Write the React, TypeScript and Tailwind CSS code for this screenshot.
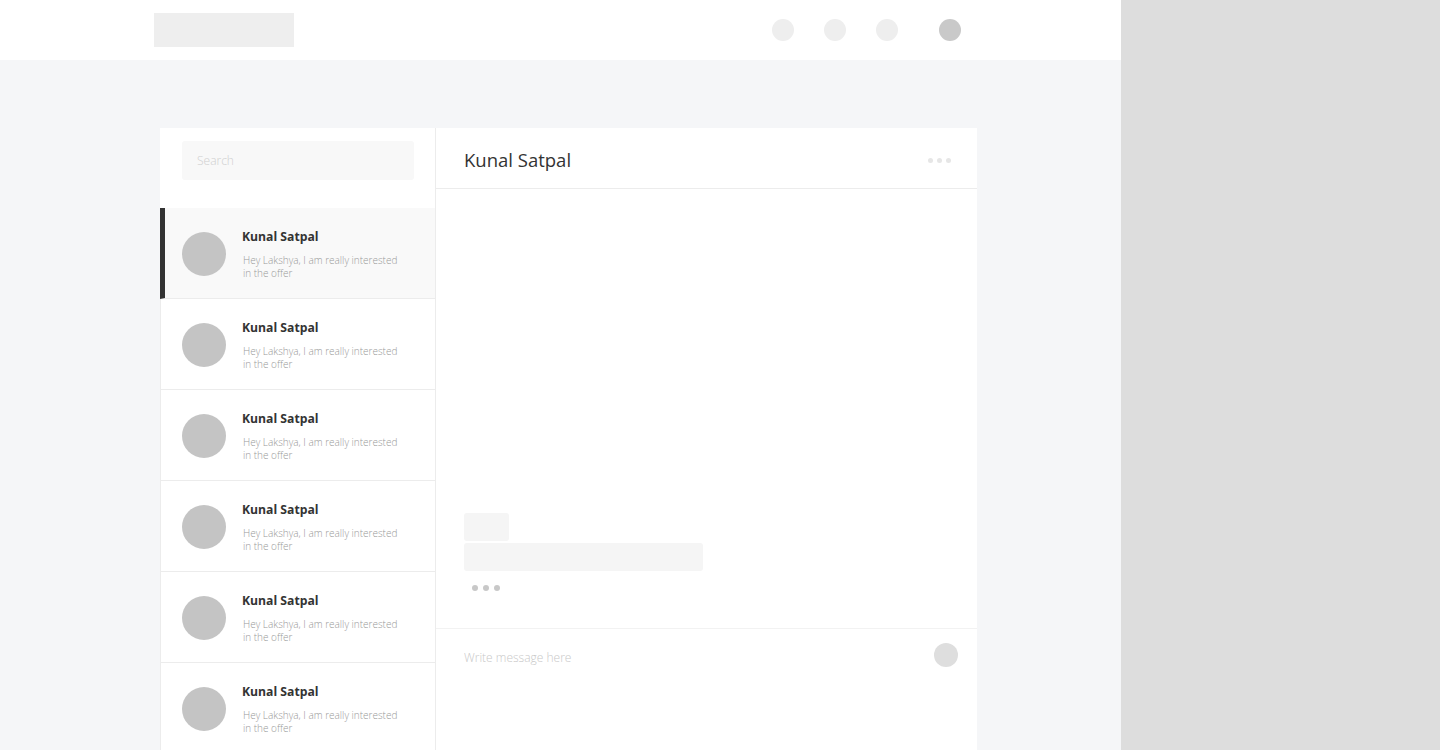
import React from "react";

const chats = Array.from({ length: 6 }, (_, i) => ({
  id: i,
  name: "Kunal Satpal",
  preview: "Hey Lakshya, I am really interested in the offer",
}));

function TopBar() {
  return (
    <header className="flex h-[60px] items-center bg-white pl-[154px]">
      <div className="h-[34px] w-[140px] bg-[#eeeeee]" />
      <div className="ml-[478px] flex items-center">
        <span className="h-[22px] w-[22px] rounded-full bg-[#eeeeee]" />
        <span className="ml-[30px] h-[22px] w-[22px] rounded-full bg-[#eeeeee]" />
        <span className="ml-[30px] h-[22px] w-[22px] rounded-full bg-[#eeeeee]" />
        <span className="ml-[41px] h-[22px] w-[22px] rounded-full bg-[#c9c9c9]" />
      </div>
    </header>
  );
}

function ChatList() {
  return (
    <aside className="w-[276px] shrink-0 border-r border-[#ececec] bg-white">
      <div className="pt-[13px] pl-[22px] pr-[21px] pb-[28px]">
        <input
          placeholder="Search"
          className="h-[39px] w-full rounded-[3px] bg-[#f8f8f8] px-[15px] text-[12px] font-light text-[#555] outline-none placeholder:text-[#cfcfcf]"
        />
      </div>
      <ul>
        {chats.map((c, i) => (
          <li
            key={c.id}
            className={
              i === 0
                ? "flex h-[91px] border-b border-l-[5px] border-b-[#ececec] border-l-[#333333] bg-[#f9f9f9] pt-[24px] pl-[17px]"
                : "flex h-[91px] border-b border-l border-[#ececec] bg-white pt-[24px] pl-[21px]"
            }
          >
            <div className="h-[44px] w-[44px] shrink-0 rounded-full bg-[#c4c4c4]" />
            <div className="ml-[16px]">
              <p className="-mt-[4px] text-[12.2px] font-bold leading-[18px] text-[#333333]">{c.name}</p>
              <p className="mt-[8px] ml-[1px] w-[160px] text-[10px] font-light leading-[13px] text-[#999999]">{c.preview}</p>
            </div>
          </li>
        ))}
      </ul>
    </aside>
  );
}

function ChatWindow() {
  return (
    <section className="flex w-[541px] flex-col bg-white">
      <div className="flex h-[61px] items-center justify-between border-b border-[#ececec] pt-[4px] pl-[28px] pr-[26px]">
        <h2 className="text-[18.5px] leading-[24px] text-[#333333]">Kunal Satpal</h2>
        <div className="flex gap-[4px]">
          <span className="h-[5px] w-[5px] rounded-full bg-[#e6e6e6]" />
          <span className="h-[5px] w-[5px] rounded-full bg-[#e6e6e6]" />
          <span className="h-[5px] w-[5px] rounded-full bg-[#e6e6e6]" />
        </div>
      </div>
      <div className="flex h-[439px] flex-col justify-end pl-[28px] pb-[37px]">
        <div className="h-[28px] w-[45px] rounded-[3px] bg-[#f5f5f5]" />
        <div className="mt-[2px] h-[28px] w-[239px] rounded-[3px] bg-[#f5f5f5]" />
        <div className="mt-[14px] flex gap-[5px] pl-[8px]">
          <span className="h-[6px] w-[6px] rounded-full bg-[#c8c8c8]" />
          <span className="h-[6px] w-[6px] rounded-full bg-[#c8c8c8]" />
          <span className="h-[6px] w-[6px] rounded-full bg-[#c8c8c8]" />
        </div>
      </div>
      <div className="flex h-[260px] items-start justify-between border-t border-[#f2f2f2] pl-[28px] pr-[19px] pt-[14px]">
        <input
          placeholder="Write message here"
          className="mt-[2px] h-[24px] w-[300px] text-[12px] font-light text-[#555] outline-none placeholder:text-[#c8c8c8]"
        />
        <button className="h-[24px] w-[24px] rounded-full bg-[#dedede]" />
      </div>
    </section>
  );
}

export default function App() {
  return (
    <div className="flex min-h-screen font-['Open_Sans',sans-serif]">
      <div className="w-[1121px] shrink-0 bg-[#f5f6f8]">
        <TopBar />
        <main className="pt-[68px] pl-[160px]">
          <div className="flex w-[817px]">
            <ChatList />
            <ChatWindow />
          </div>
        </main>
      </div>
      <div className="flex-1 bg-[#dddddd]" />
    </div>
  );
}
